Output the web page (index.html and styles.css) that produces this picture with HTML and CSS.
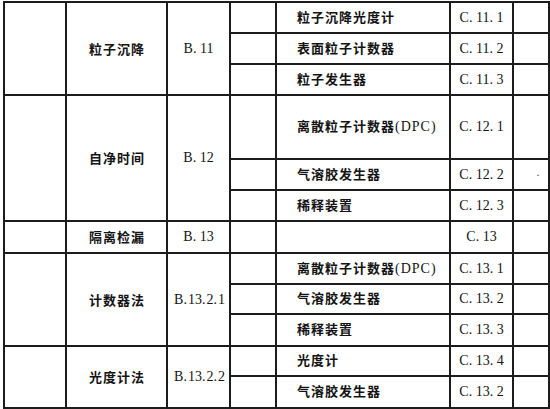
FILE: index.html
```html
<!DOCTYPE html>
<html lang="zh">
<head>
<meta charset="utf-8">
<title>表</title>
<link rel="stylesheet" href="styles.css">
</head>
<body>
<table class="grid">
  <colgroup>
    <col class="c1"><col class="c2"><col class="c3"><col class="c4"><col class="c5"><col class="c6"><col class="c7">
  </colgroup>
  <tbody>
    <tr class="h31">
      <td rowspan="3"></td>
      <td rowspan="3" class="name">粒子沉降</td>
      <td rowspan="3" class="ref">B. 11</td>
      <td></td>
      <td class="item">粒子沉降光度计</td>
      <td class="ref">C. 11. 1</td>
      <td></td>
    </tr>
    <tr class="h31">
      <td></td>
      <td class="item">表面粒子计数器</td>
      <td class="ref">C. 11. 2</td>
      <td></td>
    </tr>
    <tr class="h31">
      <td></td>
      <td class="item">粒子发生器</td>
      <td class="ref">C. 11. 3</td>
      <td></td>
    </tr>
    <tr class="h64">
      <td rowspan="3"></td>
      <td rowspan="3" class="name">自净时间</td>
      <td rowspan="3" class="ref">B. 12</td>
      <td></td>
      <td class="item">离散粒子计数器<span class="latin">(DPC)</span></td>
      <td class="ref">C. 12. 1</td>
      <td></td>
    </tr>
    <tr class="h31">
      <td></td>
      <td class="item">气溶胶发生器</td>
      <td class="ref">C. 12. 2</td>
      <td class="speck">·</td>
    </tr>
    <tr class="h31">
      <td></td>
      <td class="item">稀释装置</td>
      <td class="ref">C. 12. 3</td>
      <td></td>
    </tr>
    <tr class="h32">
      <td></td>
      <td class="name">隔离检漏</td>
      <td class="ref">B. 13</td>
      <td></td>
      <td></td>
      <td class="ref">C. 13</td>
      <td></td>
    </tr>
    <tr class="h31">
      <td rowspan="3"></td>
      <td rowspan="3" class="name">计数器法</td>
      <td rowspan="3" class="ref tight">B. 13. 2. 1</td>
      <td></td>
      <td class="item">离散粒子计数器<span class="latin">(DPC)</span></td>
      <td class="ref">C. 13. 1</td>
      <td></td>
    </tr>
    <tr class="h30">
      <td></td>
      <td class="item">气溶胶发生器</td>
      <td class="ref">C. 13. 2</td>
      <td></td>
    </tr>
    <tr class="h32">
      <td></td>
      <td class="item">稀释装置</td>
      <td class="ref">C. 13. 3</td>
      <td></td>
    </tr>
    <tr class="h30">
      <td rowspan="2"></td>
      <td rowspan="2" class="name">光度计法</td>
      <td rowspan="2" class="ref tight">B. 13. 2. 2</td>
      <td></td>
      <td class="item">光度计</td>
      <td class="ref">C. 13. 4</td>
      <td></td>
    </tr>
    <tr class="h32">
      <td></td>
      <td class="item">气溶胶发生器</td>
      <td class="ref">C. 13. 2</td>
      <td></td>
    </tr>
  </tbody>
</table>
</body>
</html>
```

FILE: styles.css
```css
html, body {
  margin: 0;
  padding: 0;
  background: #ffffff;
}

body {
  padding: 1px 0 0 3px;
  font-family: "Liberation Serif", "Noto Sans CJK SC", serif;
  color: #141414;
}

.grid {
  border-collapse: collapse;
  table-layout: fixed;
  width: 545px;
}

.c1 { width: 62px; }
.c2 { width: 101px; }
.c3 { width: 63px; }
.c4 { width: 46px; }
.c5 { width: 174px; }
.c6 { width: 63px; }
.c7 { width: 36px; }

.grid td {
  border: 2px solid #1c1c1c;
  padding: 0;
  box-sizing: border-box;
  vertical-align: middle;
  font-size: 14px;
  line-height: 16px;
  white-space: nowrap;
}

.h30 td { height: 30px; }
.h31 td { height: 31px; }
.h32 td { height: 32px; }
.h64 td { height: 64px; }

.grid td.name {
  text-align: center;
  font-family: "Noto Sans CJK SC", sans-serif;
  font-weight: 700;
  font-size: 13px;
  letter-spacing: 1px;
  padding-left: 1px;
}

.grid td.item {
  text-align: left;
  font-family: "Liberation Serif", "Noto Sans CJK SC", serif;
  font-weight: 700;
  font-size: 13px;
  letter-spacing: 1px;
  padding-left: 20px;
}

.latin {
  font-family: "Liberation Serif", serif;
  font-weight: 400;
  font-size: 14px;
  letter-spacing: 1px;
}

.grid td.ref {
  text-align: center;
  font-family: "Liberation Serif", serif;
  font-size: 14px;
}

.grid td.ref.tight {
  word-spacing: -2.5px;
  padding-left: 2px;
}

.grid td.speck {
  text-align: center;
  padding-left: 14px;
  font-size: 12px;
  color: #555;
}
```
